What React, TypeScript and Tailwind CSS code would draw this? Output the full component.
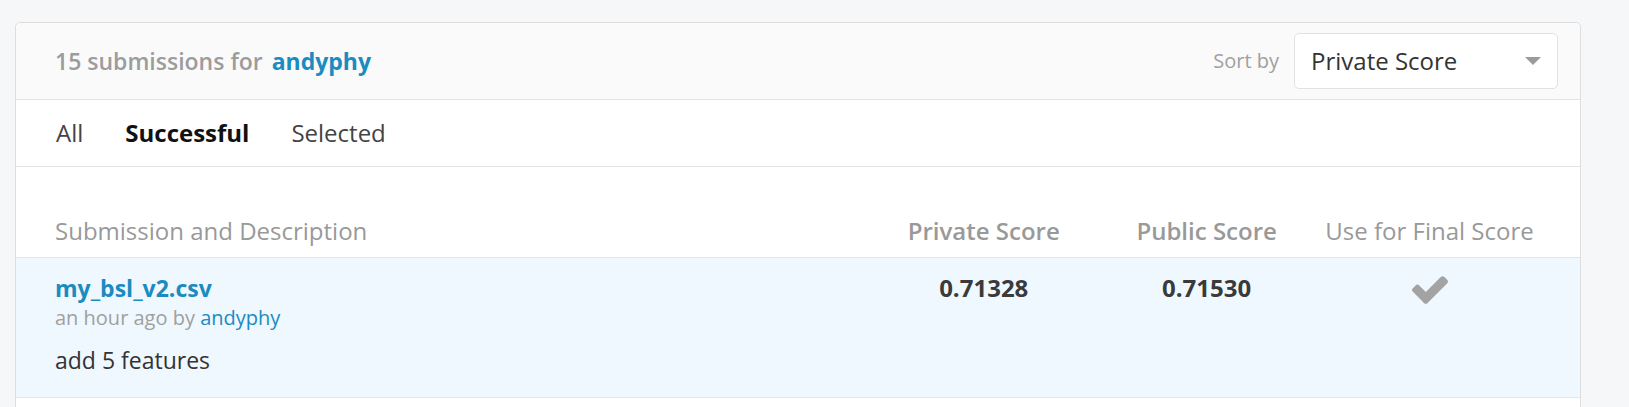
import React from "react";

const FONT = { fontFamily: '"Open Sans", "Liberation Sans", sans-serif' };

function CheckIcon() {
  return (
    <svg width="36" height="28" viewBox="121 334 1550 1188" className="fill-[#a3a3a3]">
      <path d="M1671 566q0 40-28 68l-724 724-136 136q-28 28-68 28t-68-28l-136-136-362-362q-28-28-28-68t28-68l136-136q28-28 68-28t68 28l294 295 656-657q28-28 68-28t68 28l136 136q28 28 28 68z" />
    </svg>
  );
}

export default function App() {
  return (
    <div className="h-[407px] w-full overflow-hidden bg-[#f5f7f8] pt-[22px] pl-[15px]" style={FONT}>
      <div className="w-[1566px] rounded-t-[5px] border border-[#dedede] bg-white">
        {/* header */}
        <div className="flex h-[77px] items-center justify-between rounded-t-[5px] border-b border-[#e4e4e4] bg-[#fafafa] pl-[39px] pr-[22px]">
          <div className="text-[23px] font-semibold leading-[30px] text-[#9c9c9c]">
            15 submissions for <span className="ml-[3px] font-bold text-[#1b8bc0]">andyphy</span>
          </div>
          <div className="flex items-center">
            <span className="mr-[15px] text-[20px] text-[#a0a0a0]">Sort by</span>
            <div className="flex h-[56px] w-[264px] items-center justify-between rounded-[5px] border border-[#e2e2e2] bg-white pl-[16px] pr-[16px]">
              <span className="text-[24px] text-[#333]">Private Score</span>
              <svg width="16" height="8" viewBox="0 0 16 8" className="fill-[#9b9b9b]">
                <polygon points="0,0 16,0 8,8" />
              </svg>
            </div>
          </div>
        </div>

        {/* tabs */}
        <div className="flex h-[67px] items-center gap-[42px] border-b border-[#e4e4e4] pl-[40px] text-[24px] leading-[30px]">
          <span className="text-[#444]">All</span>
          <span className="font-bold text-[#111]">Successful</span>
          <span className="text-[#444]">Selected</span>
        </div>

        {/* table head */}
        <div className="grid h-[91px] grid-cols-[55%_15%_15%_15%] items-end border-b border-[#dbe8ef] px-[39px] pb-[11px] text-[24px] leading-[30px] text-[#999]">
          <span>Submission and Description</span>
          <span className="text-center font-semibold">Private Score</span>
          <span className="text-center font-semibold">Public Score</span>
          <span className="text-center">Use for Final Score</span>
        </div>

        {/* row */}
        <div className="grid h-[140px] grid-cols-[55%_15%_15%_15%] border-b border-[#e1e8ec] bg-[#eef8fe] px-[39px] pt-[15px]">
          <div className="flex flex-col">
            <span className="text-[23px] font-bold leading-[30px] text-[#1b8bc0]">my_bsl_v2.csv</span>
            <span className="text-[20px] leading-[30px] text-[#a0a0a0]">
              an hour ago by <span className="text-[#1b8bc0]">andyphy</span>
            </span>
            <span className="mt-[12px] text-[23px] leading-[30px] text-[#333]">add 5 features</span>
          </div>
          <div className="text-center text-[24px] font-bold leading-[30px] text-[#3a3a3a]">0.71328</div>
          <div className="text-center text-[24px] font-bold leading-[30px] text-[#3a3a3a]">0.71530</div>
          <div className="flex justify-center pt-[3px]">
            <CheckIcon />
          </div>
        </div>

        <div className="h-[40px] bg-white" />
      </div>
    </div>
  );
}
